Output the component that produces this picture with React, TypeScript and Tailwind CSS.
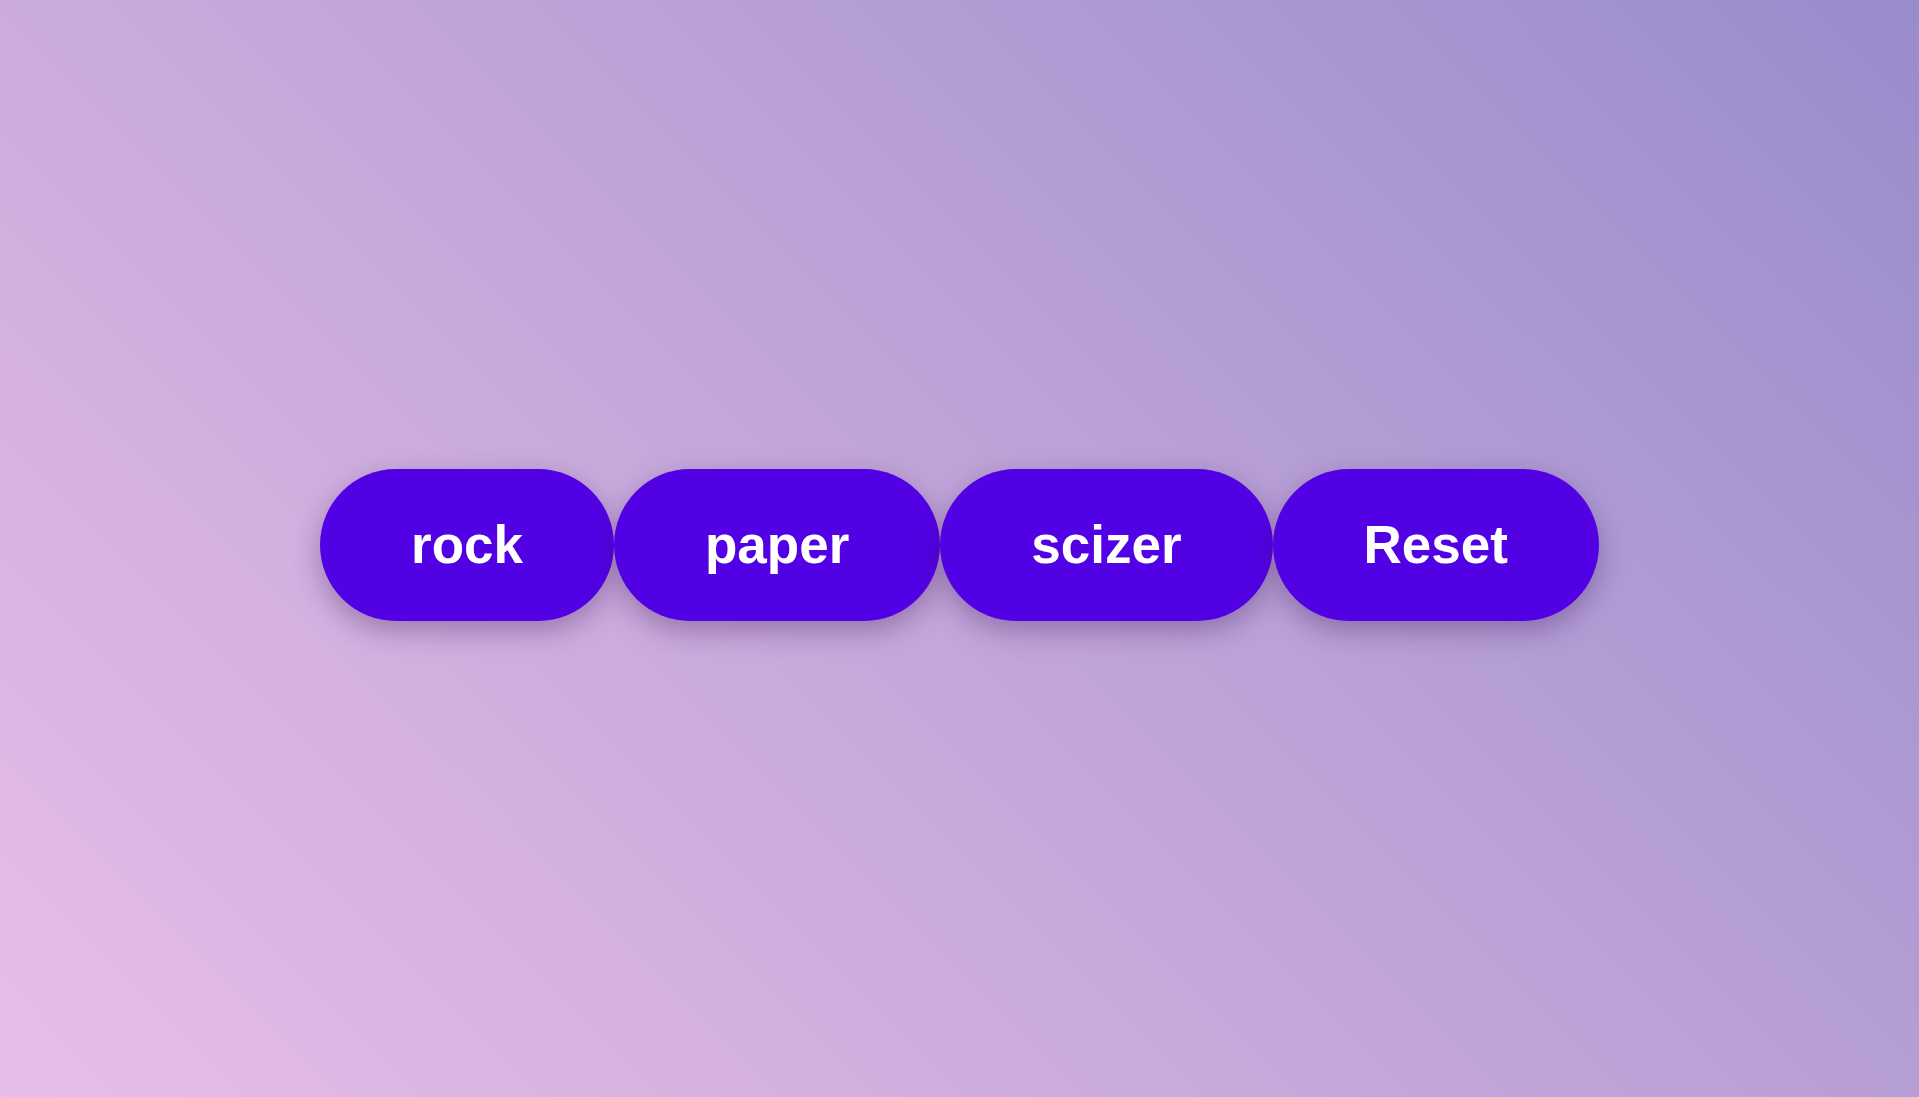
import React from "react";

export default function App() {
  const items = ["rock", "paper", "scizer", "Reset"];
  return (
    <div className="w-full h-[1097px] flex items-center justify-center bg-[linear-gradient(45deg,#e8bee8,#998ccb)]">
      <div className="flex items-center -mt-[8px]">
        {items.map((t) => (
          <button
            key={t}
            className="h-[152px] px-[91px] rounded-full bg-[#5200e4] text-white font-bold text-[53px] leading-none shadow-[0_10px_28px_rgba(60,20,90,0.35)] font-['Liberation_Sans',Arial,sans-serif]"
          >
            {t}
          </button>
        ))}
      </div>
    </div>
  );
}
